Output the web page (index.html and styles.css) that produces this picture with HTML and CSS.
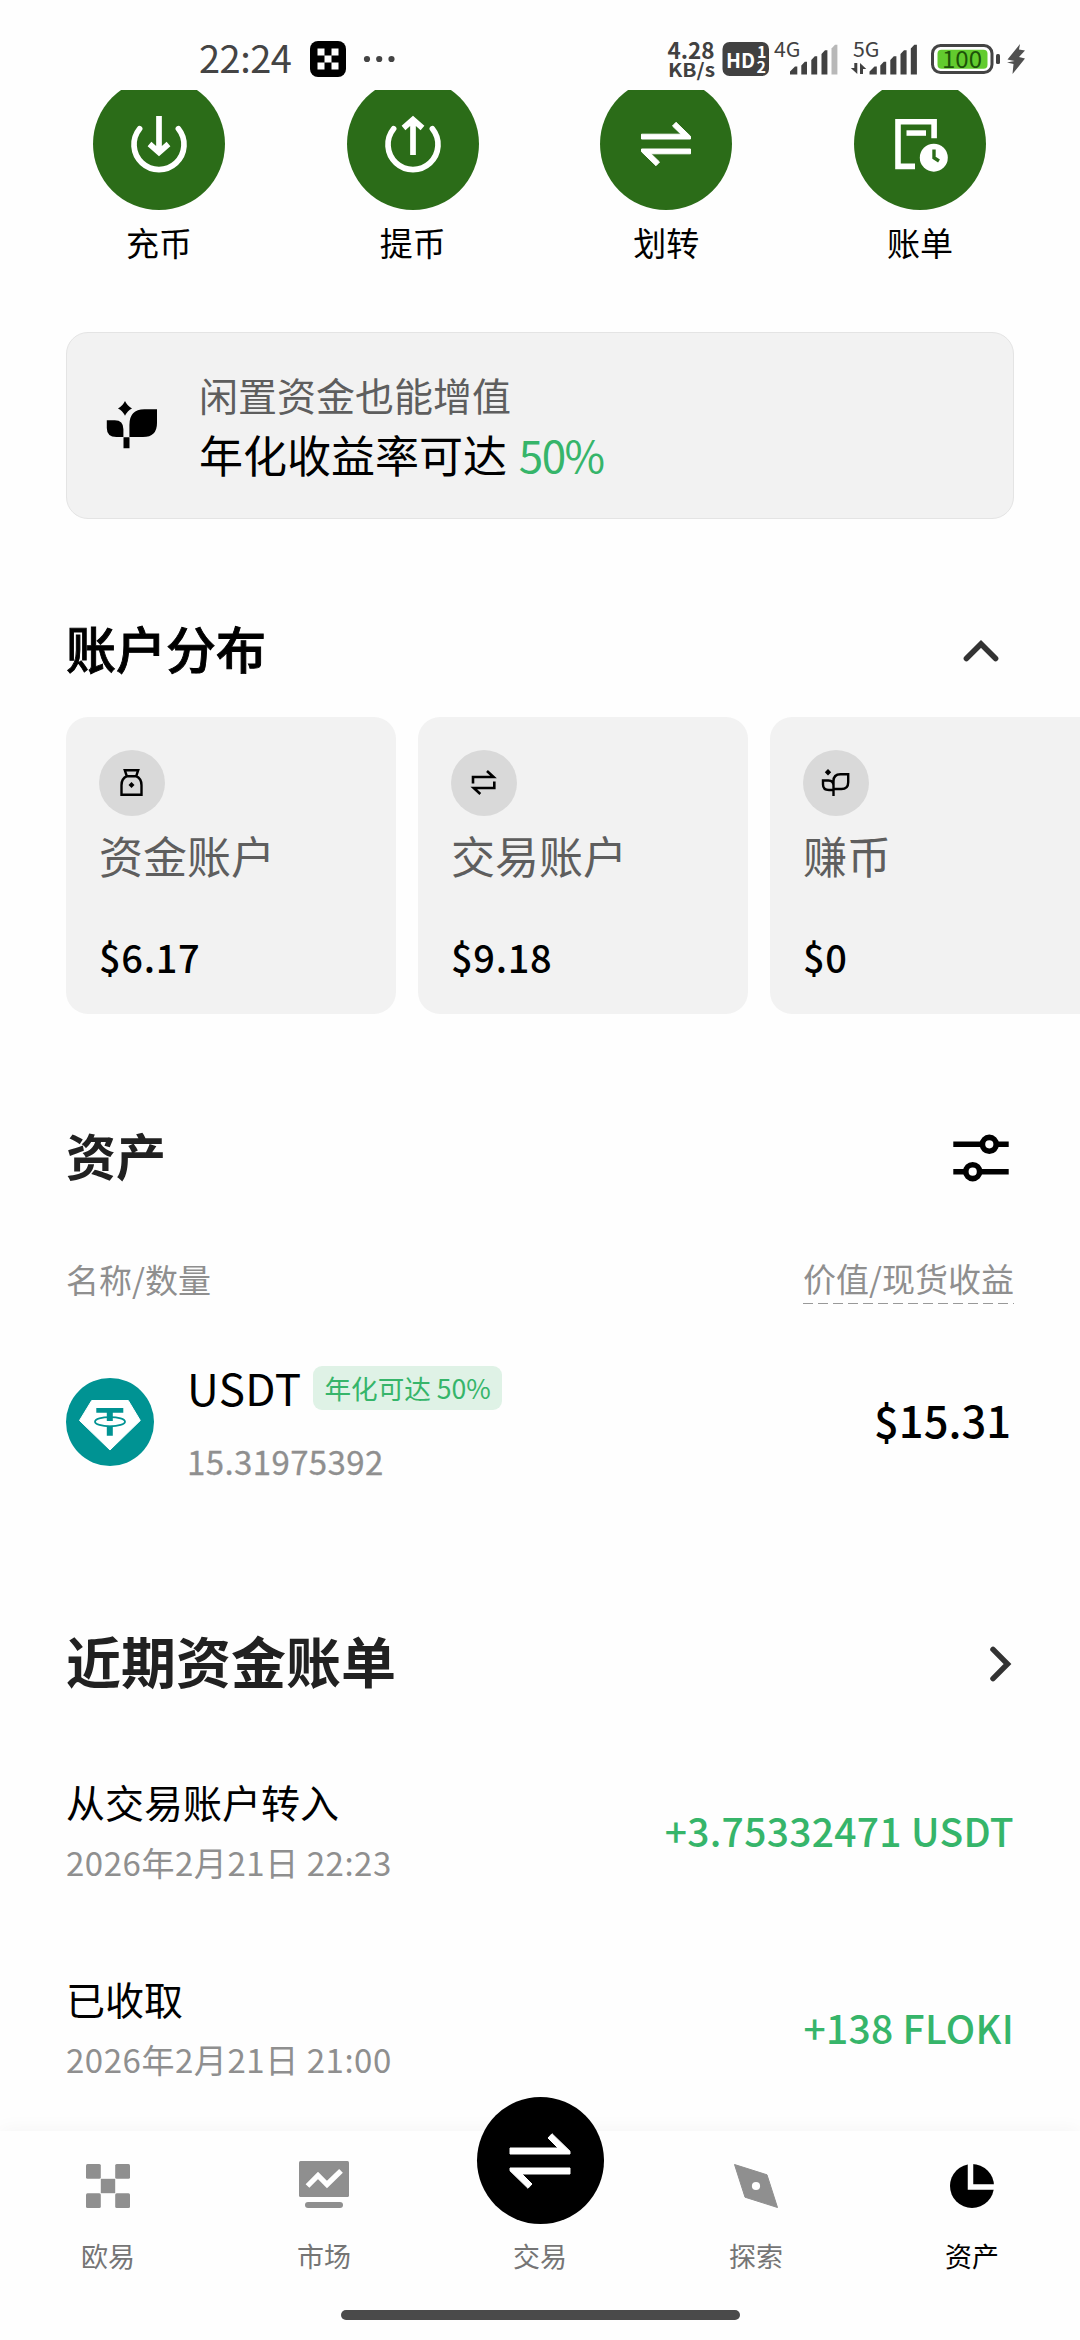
FILE: index.html
```html
<!DOCTYPE html>
<html lang="zh-CN">
<head>
<meta charset="utf-8">
<title>资产</title>
<link rel="stylesheet" href="styles.css">
</head>
<body>
<div class="page">
  <header class="status">
    <div class="status-left">
      <span class="clock">22:24</span>
      <svg class="app-mark" width="36" height="36" viewBox="0 0 36 36"><rect width="36" height="36" rx="8"/><path fill="#fff" d="M7.5 8h7v7h-7zM21.500 8h7v7h-7zM14.500 15h7v7h-7zM7.500 22h7v7h-7zM21.500 22h7v7h-7z" transform="translate(0 -.5)"/></svg>
      <svg class="dots" width="32" height="8" viewBox="0 0 32 8" fill="#444"><circle cx="4" cy="4" r="3.100"/><circle cx="16.200" cy="4" r="3.100"/><circle cx="28.500" cy="4" r="3.100"/></svg>
    </div>
    <svg class="status-right" width="362" height="40" viewBox="666 40 362 40" fill="#414141">
      <text class="st-b" x="667.500" y="59" font-size="22.500" textLength="47" lengthAdjust="spacingAndGlyphs">4.28</text>
      <text class="st-b" x="668" y="77" font-size="18.500" textLength="47" lengthAdjust="spacingAndGlyphs">KB/s</text>
      <rect x="722.500" y="42" width="46.500" height="34" rx="7"/>
      <g fill="#fff"><text class="st-b" x="726" y="67.500" font-size="20.500" textLength="29" lengthAdjust="spacingAndGlyphs">HD</text>
      <text class="st-b" x="757" y="57.500" font-size="16">1</text><text class="st-b" x="756.500" y="72.500" font-size="16">2</text></g>
      <text class="st" x="774" y="57" font-size="20.500" textLength="26.500" lengthAdjust="spacingAndGlyphs">4G</text>
      <path d="M790 71.500l5-5h2.300v8H790zM801.300 65.500l3.500-3.800h2.200v12.800h-5.700zM811.300 60l3.500-3.800h2.400v18.300h-5.900zM821.500 54l3.500-3.800h2.400v24.300h-5.900z"/>
      <path fill="#b8b8b8" d="M831.500 48.500l3.500-3.800h2.400v29.800h-5.900z"/>
      <text class="st" x="853" y="57" font-size="20.500" textLength="26.500" lengthAdjust="spacingAndGlyphs">5G</text>
      <path d="M854.300 63h3v11l-6.500-6h3.500zM860 74V63l6.300 6h-3.300v5z"/>
      <path d="M869.500 71.500l5-5h2.300v8h-7.300zM880.300 65.500l3.500-3.800h2.400v12.800h-5.900zM890.300 60l3.500-3.800h2.600v18.300h-6.100zM900.500 54l3.500-3.800h2.600v24.300h-6.100zM910.800 48.500l3.500-3.800h2.600v29.800h-6.100z"/>
      <rect x="932.500" y="45.500" width="59.500" height="27" rx="8" fill="none" stroke="#444" stroke-width="3"/>
      <rect x="937.500" y="49.700" width="50" height="19" rx="4" fill="#62cb2e"/>
      <text class="st" x="942" y="67.500" font-size="23" fill="#1c5208" textLength="40" lengthAdjust="spacingAndGlyphs">100</text>
      <rect x="996" y="54" width="4" height="10" rx="1.500"/>
      <path fill="#505050" d="M1020 44l-12.500 15.500 7 1.500-7.500 1.500 6.500 1.500-1 10 12.500-15.500-6-1.500 6-6.500-6-1z"/>
    </svg>
  </header>

  <main class="content">
    <section class="actions">
      <div class="action">
        <div class="action-disc"><svg width="72" height="72" viewBox="0 0 72 72" fill="none" stroke="#fff" stroke-width="5.700"><path stroke-linecap="round" d="M16.600 20.800a25 25 0 1 0 38.800 0"/><path d="M36 8v37M26.500 36l9.500 8.400 9.500-8.400"/></svg></div>
        <span>充币</span>
      </div>
      <div class="action">
        <div class="action-disc"><svg width="72" height="72" viewBox="0 0 72 72" fill="none" stroke="#fff" stroke-width="5.700"><path stroke-linecap="round" d="M16.600 20.800a25 25 0 1 0 38.800 0"/><path d="M36 47V12M26.500 20l9.500-8.400 9.500 8.400"/></svg></div>
        <span>提币</span>
      </div>
      <div class="action">
        <div class="action-disc"><svg width="72" height="72" viewBox="0 0 72 72" fill="#fff" stroke="#fff" stroke-linejoin="round"><path d="M11.500 26.200h39.500l-8.500-8.200 3.500-3.700 14.500 14v2.700h-49zM60.500 45.800H21l8.500 8.200-3.500 3.700-14.500-14V41h49z"/></svg></div>
        <span>划转</span>
      </div>
      <div class="action">
        <div class="action-disc"><svg width="72" height="72" viewBox="0 0 72 72"><path fill="none" stroke="#fff" stroke-width="5.600" d="M50.100 30.300V13.800H14v44.600h17"/><path fill="#fff" d="M22.500 22.300H42v5.500H22.500z"/><circle cx="49.800" cy="49.700" r="14" fill="#fff"/><path fill="none" stroke="#2b6c18" stroke-width="3.400" d="M50 41.500v8.300l5 3.200"/></svg></div>
        <span>账单</span>
      </div>
    </section>

    <section class="banner">
      <svg class="banner-icon" width="52" height="50" viewBox="106 400 52 50"><path d="M125 401q2.300 5 7 7.400-4.700 2.400-7 7.400-2.300-5-7-7.400 4.700-2.400 7-7.400zM106.800 420.300h8q8.600 0 8.600 9v7.700h-7q-9.600 0-9.600-9zM129.400 437v-12q0-15.700 15-15.700H157v13.700q0 14-14 14zM123.500 437.300h6v11h-6z"/></svg>
      <div class="banner-text">
        <p class="banner-sub">闲置资金也能增值</p>
        <p class="banner-main">年化收益率可达 <b>50%</b></p>
      </div>
    </section>

    <section class="heading heading-accounts">
      <h2>账户分布</h2>
      <svg class="chev-up" width="36" height="24" viewBox="0 0 36 24" fill="none" stroke="#333" stroke-width="5.500"><path stroke-linecap="round" d="M3.400 19.500L18 5l14.600 14.500"/></svg>
    </section>
    <section class="cards">
      <article class="card">
        <div class="card-disc"><svg width="30" height="30" viewBox="117 768 30 30" fill="none" stroke="#000" stroke-width="2.400"><path d="M124.800 770.200h13.400l-2 6h-9.400zM127 776.200q-5.500 2.300-5.500 9v9.600h20v-9.600q0-6.700-5.500-9"/><path fill="#000" stroke="none" d="M131.500 782l3 3-3 3-3-3z"/></svg></div>
        <h3>资金账户</h3><p>$6.17</p>
      </article>
      <article class="card">
        <div class="card-disc"><svg width="30" height="30" viewBox="469 768 30 30" fill="none" stroke="#000" stroke-width="2.600"><path d="M473 783.500V777h20.500l-6.500-6M494.300 781.500v6.500h-20.500l6.500 6"/></svg></div>
        <h3>交易账户</h3><p>$9.18</p>
      </article>
      <article class="card">
        <div class="card-disc"><svg width="30" height="30" viewBox="821 768 30 30" fill="none" stroke="#000" stroke-width="2.400"><path fill="#000" stroke="none" d="M828 769l3.200 3.300-3.200 3.300-3.200-3.300z"/><path d="M833.500 796v-15q0-6.800 7-6.800h7.700v8q0 6.800-6.800 6.800h-7.900M833.500 790h-4.500q-6 0-6-5.500v-4h5.500q5 0 5 5"/></svg></div>
        <h3>赚币</h3><p>$0</p>
      </article>
    </section>

    <section class="heading heading-assets">
      <h2>资产</h2>
      <svg class="sliders" width="56" height="48" viewBox="953 1134 56 48" fill="none" stroke="#000" stroke-width="5.600"><path d="M953.300 1144.300h30M995.500 1144.300h13.200M953.300 1171.700h13.200M978.500 1171.700h30.200"/><circle cx="989.300" cy="1144.300" r="6.900"/><circle cx="972.700" cy="1171.700" r="6.900"/></svg>
    </section>
    <div class="columns"><span>名称/数量</span><span class="col-value">价值/现货收益</span></div>
    <section class="asset">
      <svg class="coin" width="88" height="88" viewBox="66 1378 88 88"><circle cx="110" cy="1422" r="44" fill="#009393"/><path fill="#fff" stroke="#fff" stroke-linejoin="round" d="M91.700 1400.500h36.600l12 20-30.300 29.500-30.500-29.500z"/><path fill="#009393" d="M96.300 1408h27v4.800h-10.500v8.200h-6v-8.200H96.300zM106.800 1425.800h6v10h-6z"/><ellipse cx="110" cy="1421.700" rx="15" ry="4.600" fill="none" stroke="#009393" stroke-width="1.800"/></svg>
      <div class="asset-info">
        <div class="asset-name"><span>USDT</span><em>年化可达 50%</em></div>
        <p>15.31975392</p>
      </div>
      <strong>$15.31</strong>
    </section>

    <section class="heading heading-bills">
      <h2>近期资金账单</h2>
      <svg class="chev-right" width="24" height="36" viewBox="0 0 24 36" fill="none" stroke="#333" stroke-width="5.500"><path stroke-linecap="round" d="M4 3.400L18.500 18 4 32.600"/></svg>
    </section>
    <section class="bills">
      <div class="bill"><div><h3>从交易账户转入</h3><p>2026年2月21日 22:23</p></div><b>+3.75332471 USDT</b></div>
      <div class="bill"><div><h3>已收取</h3><p>2026年2月21日 21:00</p></div><b>+138 FLOKI</b></div>
    </section>
  </main>

  <footer class="footer">
    <nav class="tabs">
      <a class="tab"><svg width="50" height="50" viewBox="83 2161 50 50" fill="#8f8f8f"><rect x="86" y="2164" width="14.800" height="14.800" rx="1.500"/><rect x="115.200" y="2164" width="14.800" height="14.800" rx="1.500"/><rect x="100.800" y="2178.800" width="14.400" height="14.400"/><rect x="86" y="2193.200" width="14.800" height="14.800" rx="1.500"/><rect x="115.200" y="2193.200" width="14.800" height="14.800" rx="1.500"/></svg><span>欧易</span></a>
      <a class="tab"><svg width="50" height="50" viewBox="299 2161 50 50" fill="#8f8f8f"><rect x="299" y="2161" width="50" height="36" rx="1.500"/><rect x="305" y="2202" width="38" height="6" rx="3"/><path fill="none" stroke="#fff" stroke-width="5.300" d="M307.500 2186l10.500-10.500 9 9 14-13.700"/></svg><span>市场</span></a>
      <a class="tab tab-trade"><i><svg width="72" height="72" viewBox="0 0 72 72" fill="#fff" stroke="#fff" stroke-linejoin="round"><path d="M6 23h48L44 13l4-4.300 18 17.500V29H6zM66 49H18l10 10-4 4.300L6 45.800V43h60z"/></svg></i><span>交易</span></a>
      <a class="tab"><svg width="50" height="50" viewBox="731 2161 50 50"><path fill="#8f8f8f" stroke="#8f8f8f" stroke-linejoin="round" d="M734.500 2164.500l32.500 10.300 10.500 32.700-32.500-10.300z"/><circle cx="756" cy="2186" r="4.100" fill="#fff"/></svg><span>探索</span></a>
      <a class="tab tab-on"><svg width="50" height="50" viewBox="947 2161 50 50"><circle cx="972" cy="2186" r="22"/><path fill="none" stroke="#fff" stroke-width="5.500" d="M970.500 2160v27.100h26"/></svg><span>资产</span></a>
    </nav>
    <div class="home-bar"></div>
  </footer>
</div>
</body>
</html>
```

FILE: styles.css
```css
* { box-sizing: border-box; margin: 0; padding: 0; }
body {
  width: 1080px;
  background: #fefefe;
  color: #000;
  font-family: "Noto Sans CJK SC", "Noto Sans", sans-serif;
}
svg { display: block; flex: none; }
.page { display: flex; flex-direction: column; height: 2340px; overflow: hidden; }

/* status bar */
.status { display: flex; justify-content: space-between; height: 90px; padding: 0 52px 0 199px; flex: none; }
.status-left { display: flex; }
.clock { width: 111px; padding-top: 32px; font-size: 38px; line-height: 50px; letter-spacing: -0.5px; color: #444; }
.app-mark { margin-top: 41px; }
.dots { margin: 55px 0 0 17px; }
.status-right { margin-top: 40px; overflow: visible; }
.st { font-family: "Noto Sans CJK SC", sans-serif; }
.st-b { font-family: "Noto Sans CJK SC", sans-serif; font-weight: 700; }

/* scrollable content */
.content { flex: 1; min-height: 0; overflow: hidden; }

.actions { display: grid; grid-template-columns: repeat(4, 253.7px); justify-content: center; height: 178px; overflow: hidden; padding-right: 1px; }
.action { display: flex; flex-direction: column; align-items: center; font-size: 33px; line-height: 40px; }
.action span { margin-top: 12px; }
.action-disc { display: grid; place-items: center; width: 132px; height: 132px; margin-top: -12px; border-radius: 50%; background: #2b6c18; flex: none; }

.banner { display: flex; height: 187px; margin: 64px 66px 0; border: 1px solid #e4e4e4; border-radius: 22px; background: #f2f2f2; }
.banner-icon { margin: 67px 0 0 39px; }
.banner-text { margin: 31px 0 0 41px; line-height: 60px; white-space: nowrap; }
.banner-sub { font-size: 39px; color: #5e5e5e; }
.banner-main { font-size: 44px; }
.banner-main b { font-weight: 400; color: #36b56a; margin-left: 2px; letter-spacing: -1.6px; }

.heading { display: flex; align-items: center; justify-content: space-between; padding-left: 66px; }
.heading h2 { font-size: 50px; line-height: 60px; font-weight: 700; color: #212121; }
.heading-accounts { margin-top: 98px; padding-right: 81px; }
.heading-accounts h2 { font-weight: 500; color: #000; -webkit-text-stroke: 0.9px #000; }
.chev-up { margin-top: 8px; }
.heading-assets { margin-top: 110px; padding-right: 71px; }
.sliders { margin-top: 8px; }
.heading-bills { margin-top: 146px; padding-right: 67px; }
.heading-bills h2 { font-size: 55px; line-height: 66px; }
.chev-right { margin-top: 9px; }

.cards { display: flex; gap: 22px; margin-top: 40px; padding-left: 66px; }
.card { flex: none; width: 330px; height: 297px; padding: 33px; border-radius: 22px; background: #f2f2f2; }
.card-disc { display: grid; place-items: center; width: 66px; height: 66px; border-radius: 50%; background: #d9d9d9; }
.card h3 { margin-top: 9px; font-size: 44px; line-height: 60px; font-weight: 400; color: #5e5e5e; }
.card p { margin-top: 48px; font-size: 38px; line-height: 48px; font-weight: 500; letter-spacing: 0.7px; }

.columns { display: flex; justify-content: space-between; height: 45px; margin: 75px 66px 0; font-size: 33px; line-height: 41px; color: #8f8f8f; }
.col-value {
  height: 45px;
  line-height: 39px;
  background: repeating-linear-gradient(90deg, #999 0 10px, transparent 10px 15px) left bottom / 100% 1.5px no-repeat;
}

.asset { display: flex; align-items: center; margin: 62px 69px 0 66px; }
.coin { margin-top: -3px; }
.asset-info { flex: 1; margin-left: 33px; }
.asset-name { display: flex; height: 44px; font-size: 44px; line-height: 42px; letter-spacing: 0.4px; }
.asset-name em { height: 44px; margin-left: 11px; padding: 0 11px 0 12px; border-radius: 9px; background: #dff2e6; color: #36b56a; font-size: 26.6px; line-height: 44px; font-style: normal; letter-spacing: 0; }
.asset-info p { margin-top: 31px; margin-bottom: -1px; font-size: 33px; line-height: 40px; letter-spacing: 0.4px; color: #8f8f8f; -webkit-text-stroke: 0.3px #8f8f8f; }
.asset strong { margin-bottom: 6px; font-size: 43.5px; font-weight: 500; line-height: 50px; }

.bills { display: flex; flex-direction: column; gap: 92px; margin: 84px 66px 0; }
.bill { display: flex; align-items: center; justify-content: space-between; height: 105px; }
.bill h3 { font-size: 39px; line-height: 50px; font-weight: 400; }
.bill p { margin-top: 16px; margin-bottom: -1px; font-size: 33px; line-height: 40px; letter-spacing: 0.55px; color: #8f8f8f; }
.bill b { margin-top: 2px; font-size: 39px; font-weight: 500; color: #36b56a; letter-spacing: 0.3px; }

/* bottom tab bar */
.footer { flex: none; height: 209px; background: #fefefe; box-shadow: 0 -2px 18px rgba(0, 0, 0, 0.04); }
.tabs { display: grid; grid-template-columns: repeat(5, 1fr); height: 143px; padding-top: 30px; }
.tab { display: flex; flex-direction: column; align-items: center; font-size: 27px; line-height: 36px; color: #757575; }
.tab span { margin-top: 27px; }
.tab-trade i { display: grid; place-items: center; width: 127px; height: 127px; margin-top: -64px; border-radius: 50%; background: #000; }
.tab-trade span { margin-top: 14px; }
.tab-on { color: #000; }
.home-bar { width: 399px; height: 10px; margin: 36px auto 0; border-radius: 5px; background: #4a4a4a; }
```
